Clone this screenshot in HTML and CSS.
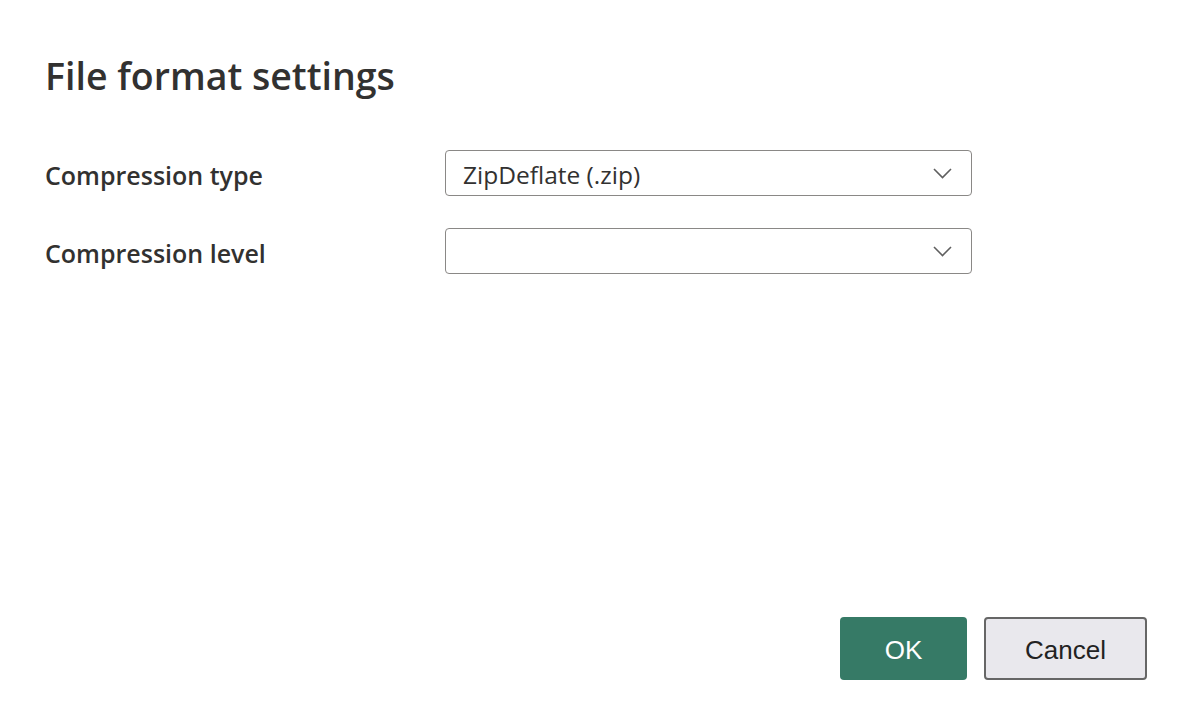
FILE: index.html
```html
<!DOCTYPE html>
<html>
<head>
<meta charset="utf-8">
<link rel="stylesheet" href="styles.css">
</head>
<body>
<div class="dialog">
  <h1 class="title">File format settings</h1>
  <div class="form">
    <div class="row">
      <div class="label">Compression type</div>
      <div class="select">
        <span class="value">ZipDeflate (.zip)</span>
        <svg class="chev" width="19" height="11" viewBox="0 0 19 11"><path d="M1 1 L9.5 9.5 L18 1" fill="none" stroke="#5f5f5f" stroke-width="1.6"/></svg>
      </div>
    </div>
    <div class="row">
      <div class="label">Compression level</div>
      <div class="select">
        <span class="value"></span>
        <svg class="chev" width="19" height="11" viewBox="0 0 19 11"><path d="M1 1 L9.5 9.5 L18 1" fill="none" stroke="#5f5f5f" stroke-width="1.6"/></svg>
      </div>
    </div>
  </div>
  <div class="footer">
    <button class="btn ok">OK</button>
    <button class="btn cancel">Cancel</button>
  </div>
</div>
</body>
</html>
```
FILE: styles.css
```css
html, body {
  margin: 0;
  padding: 0;
  background: #ffffff;
}
body {
  font-family: "Open Sans", "Noto Sans", sans-serif;
  color: #323130;
}
.dialog {
  box-sizing: border-box;
  height: 716px;
  padding: 50px 43px 36px 45px;
  display: flex;
  flex-direction: column;
}
.title {
  margin: 0;
  font-size: 37.5px;
  font-weight: 600;
  line-height: 52px;
  color: #323130;
}
.form {
  margin-top: 48px;
  display: flex;
  flex-direction: column;
  gap: 32px;
}
.row {
  display: flex;
  align-items: center;
}
.label {
  width: 400px;
  font-size: 25px;
  font-weight: 600;
  padding-top: 4px;
}
.select {
  box-sizing: border-box;
  width: 527px;
  height: 46px;
  border: 1px solid #8a8886;
  border-radius: 4px;
  display: flex;
  align-items: center;
  justify-content: space-between;
  padding: 0 19px 0 17px;
}
.value {
  font-size: 24.5px;
  color: #323130;
  padding-top: 2px;
}
.chev {
  display: block;
}
.footer {
  margin-top: auto;
  display: flex;
  justify-content: flex-end;
  gap: 17px;
}
.btn {
  box-sizing: border-box;
  height: 63px;
  border-radius: 4px;
  font-family: "Liberation Sans", Arial, sans-serif;
  font-size: 26px;
  padding: 0;
}
.ok {
  width: 127px;
  background: #367a66;
  color: #ffffff;
  border: none;
  padding-top: 3px;
}
.cancel {
  width: 163px;
  background: #e9e8ed;
  color: #222222;
  border: 2px solid #666666;
  padding-top: 3px;
}
```
